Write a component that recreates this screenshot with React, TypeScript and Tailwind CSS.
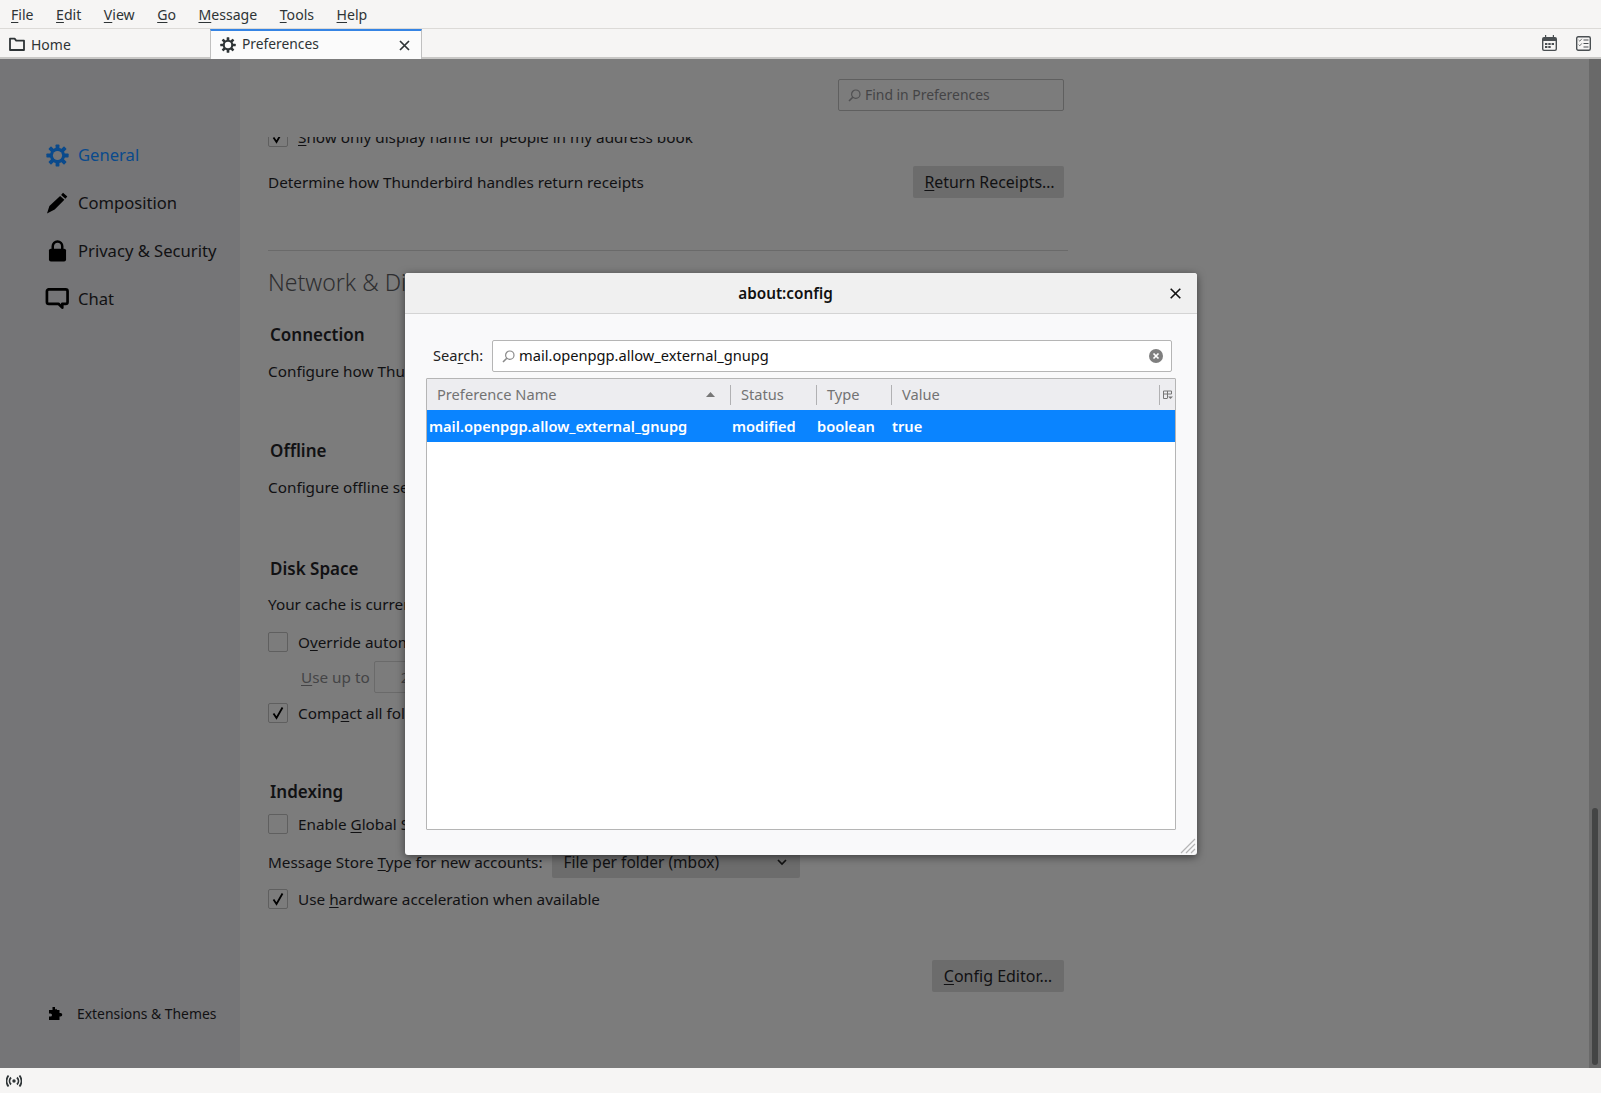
import React from "react";

const U = ({ children }: { children: React.ReactNode }) => <span className="underline underline-offset-2 decoration-1">{children}</span>;

const Gear = ({ size, color }: { size: number; color: string }) => (
  <svg width={size} height={size} viewBox="0 0 24 24" className="shrink-0">
    {[0, 45, 90, 135].map((a) => (
      <rect key={a} x="10" y="0.4" width="4" height="23.2" rx="0.8" fill={color} transform={`rotate(${a} 12 12)`} />
    ))}
    <circle cx="12" cy="12" r="8" fill={color} />
    <circle cx="12" cy="12" r="4.8" fill="var(--hole)" />
  </svg>
);

const SearchGlass = ({ color }: { color: string }) => (
  <svg width="13" height="13" viewBox="0 0 13 13" fill="none" stroke={color} strokeWidth="1.2" className="shrink-0">
    <circle cx="7.8" cy="5.2" r="4.2" />
    <path d="M4.8 8.2 1 12" strokeWidth="1.6" />
  </svg>
);

const Check = ({ checked }: { checked?: boolean }) => (
  <div className="w-5 h-5 shrink-0 border border-[#5f5f5f] rounded-[2px] flex items-center justify-center">
    {checked && (
      <svg width="14" height="14" viewBox="0 0 14 14" fill="none" stroke="#000" strokeWidth="1.8">
        <path d="M2.5 7.5 5.5 12 11.5 1.5" />
      </svg>
    )}
  </div>
);

const NavItem = ({ icon, label, active }: { icon: React.ReactNode; label: string; active?: boolean }) => (
  <div className={`h-12 flex items-center pl-[45px] gap-[9px] text-[16.6px] ${active ? "text-[#0a4a8c]" : "text-[#111113]"}`}>
    <div className="w-6 flex justify-center">{icon}</div>
    <span>{label}</span>
  </div>
);

const H = ({ children, className }: { children: React.ReactNode; className: string }) => (
  <div className={`text-[17px] font-semibold text-[#111113] pl-[2px] leading-6 ${className}`}>{children}</div>
);

const Row = ({ children, className }: { children: React.ReactNode; className: string }) => (
  <div className={`flex items-center leading-6 whitespace-nowrap ${className}`}>{children}</div>
);

const ColHead = ({ w, label, pl = 10, children }: { w: string; label: string; pl?: number; children?: React.ReactNode }) => (
  <div className={`${w} h-full flex items-center justify-between`}>
    <span style={{ paddingLeft: pl }}>{label}</span>
    {children}
  </div>
);

const Sep = () => <div className="w-px h-5 bg-[#b1b1b3] shrink-0" />;

export default function App() {
  return (
    <div className="w-[1601px] h-[1093px] relative overflow-hidden flex flex-col bg-[#7c7c7c] text-[15.3px] text-[#111113] font-['Noto_Sans',sans-serif]">
      {/* Menu bar */}
      <div className="h-[29px] shrink-0 bg-[#f6f5f4] border-b border-[#dcdad7] flex items-center pl-[11px] pt-px gap-[22.5px] text-[14.1px] text-[#2e3436]">
        <span><U>F</U>ile</span>
        <span><U>E</U>dit</span>
        <span><U>V</U>iew</span>
        <span><U>G</U>o</span>
        <span><U>M</U>essage</span>
        <span><U>T</U>ools</span>
        <span><U>H</U>elp</span>
      </div>
      {/* Tab bar */}
      <div className="h-[30px] shrink-0 bg-[#f6f5f4] border-b-2 border-[#c8c7c5] flex text-[14px] text-[#2e3436]">
        <div className="w-[210px] h-[30px] flex items-center pl-[9px] gap-[6px]">
          <svg width="16" height="16" viewBox="0 0 16 16" fill="none" stroke="#2e3436" strokeWidth="1.8">
            <path d="M1 14V2.600h4.600l1.600 2H15V14z" strokeLinejoin="round" />
          </svg>
          <span>Home</span>
        </div>
        <div className="w-[212px] h-[30px] bg-[#fbfbfb] border-x border-[#c0c0c0] border-t-2 border-t-[#3584e4] flex items-center pl-[9px] pr-[11px] [--hole:#fbfbfb]">
          <Gear size={16} color="#2e3436" />
          <span className="ml-[6px] flex-1 text-[13.8px] -mt-[2px]">Preferences</span>
          <svg width="11" height="11" viewBox="0 0 11 11" stroke="#2e3436" strokeWidth="1.7"><path d="M1 1l9 9M10 1l-9 9" /></svg>
        </div>
        <div className="flex-1 flex justify-end items-center gap-[19px] pr-[10px]">
          <svg width="15" height="16" viewBox="0 0 15 16" fill="#4a4f52">
            <path d="M3 0h1.200v2.500H3zM10.800 0H12v2.500h-1.200z" />
            <path fillRule="evenodd" d="M2 2h11a2 2 0 0 1 2 2v10a2 2 0 0 1-2 2H2a2 2 0 0 1-2-2V4a2 2 0 0 1 2-2zm-.6 4v8c0 .4.3.7.7.7h10.800c.4 0 .7-.3.7-.7V6z" />
            <path d="M3 8h2.400v2H3zM6.300 8h2.400v2H6.300zM9.600 8H12v2H9.600zM3 11h2.400v2H3zM6.300 11h2.400v2H6.300z" />
          </svg>
          <svg width="15" height="15" viewBox="0 0 15 15" fill="none" stroke="#4a4f52">
            <rect x="0.7" y="0.7" width="13.6" height="13.6" rx="1.500" strokeWidth="1.400" />
            <path d="M2.600 4l1.200 1.200L5.800 2.800M2.600 8.600l1.200 1.200 2-2.400" strokeWidth="1" stroke="#77797b" />
            <path d="M7.500 4h5M7.500 7.500h5M7.500 11h5" strokeWidth="1.200" />
          </svg>
        </div>
      </div>

      {/* Body */}
      <div className="flex-1 min-h-0 flex">
        <aside className="w-[240px] shrink-0 bg-[#757577] flex flex-col [--hole:#757577]">
          <div className="pt-[72px]">
            <NavItem active label="General" icon={<Gear size={23} color="#0a4a8c" />} />
            <NavItem label="Composition" icon={
              <svg width="22" height="22" viewBox="0 0 22 22" fill="#000"><path d="M17 .8l4.300 3.600-1.900 2.300-4.300-3.600zM14.100 4.100l4.300 3.600-9.700 9.900L1 21.500l2.400-7.400z" /></svg>
            } />
            <NavItem label="Privacy & Security" icon={
              <svg width="19" height="22" viewBox="0 0 20 23">
                <path d="M5 10V6.500a5 5 0 0 1 10 0V10" fill="none" stroke="#000" strokeWidth="2.600" />
                <rect x="1" y="9" width="18" height="13.500" rx="2" fill="#000" />
              </svg>
            } />
            <NavItem label="Chat" icon={
              <svg width="25" height="24" viewBox="0 0 25 24" fill="none" stroke="#000" strokeWidth="2.800">
                <path d="M3.500 2h18A2 2 0 0 1 23.500 4v11a2 2 0 0 1-2 2h-3.500v4l-4-4h-10a2 2 0 0 1-2-2V4a2 2 0 0 1 2-2z" strokeLinejoin="round" />
              </svg>
            } />
          </div>
          <div className="mt-auto mb-[42px] flex items-center pl-[49px] gap-[14px] text-[13.9px] h-6">
            <svg width="14" height="14" viewBox="0 0 14 14" fill="#000"><path d="M3.500 0h2.500v1.500a1 1 0 0 0 2 0V3h2.500v3h1a1.500 1.500 0 0 1 0 3.500h-1V13H0V9.500h1.500a1.500 1.500 0 0 0 0-3H0V3h3.500z" /></svg>
            <span>Extensions & Themes</span>
          </div>
        </aside>

        <main className="flex-1 min-w-0 flex flex-col">
          <div className="h-[78px] shrink-0 pl-[598px] pt-5">
            <div className="w-[226px] h-8 border border-[#5f5f5f] rounded-[2px] flex items-center pl-[9px] gap-[4px] text-[#444446] text-[13.9px]">
              <SearchGlass color="#505052" />
              <span>Find in Preferences</span>
            </div>
          </div>
          <div className="flex-1 min-h-0 overflow-hidden pl-[28px] w-[840px]">
            <Row className="gap-[10px] -mt-[12px] h-6"><Check checked /><span><U>S</U>how only display name for people in my address book</span></Row>
            <div className="mt-[17px] h-8 flex items-center justify-between w-[796px]">
              <span>Determine how Thunderbird handles return receipts</span>
              <div className="h-8 w-[151px] bg-[#6c6c6c] rounded-[2px] flex items-center justify-center text-[15.9px] pl-[2px] pt-px"><span><U>R</U>eturn Receipts…</span></div>
            </div>
            <div className="mt-[52px] h-px w-[800px] bg-[#6a6a6a]" />
            <div className="mt-[16px] text-[23px] font-light leading-[30px] text-[#2e2e30]">Network & Disk Space</div>
            <H className="mt-[26px]">Connection</H>
            <Row className="mt-[12px]">Configure how Thunderbird connects to the Internet</Row>
            <H className="mt-[56px]">Offline</H>
            <Row className="mt-[12px]">Configure offline settings</Row>
            <H className="mt-[58px]">Disk Space</H>
            <Row className="mt-[11px]">Your cache is currently using 0 bytes of disk space</Row>
            <Row className="mt-[14px] gap-[10px]"><Check /><span>O<U>v</U>erride automatic cache management</span></Row>
            <Row className="mt-[11px] pl-[33px] text-[#444446]">
              <span><U>U</U>se up to</span>
              <div className="ml-[4px] w-[100px] h-8 border border-[#6a6a6a] rounded-[2px] flex items-center pl-[26px] -my-1">2</div>
            </Row>
            <Row className="mt-[12px] gap-[10px]"><Check checked /><span>Comp<U>a</U>ct all folders when it will save over 20 MB</span></Row>
            <H className="mt-[55px]">Indexing</H>
            <Row className="mt-[8px] gap-[10px]"><Check /><span>Enable <U>G</U>lobal Search and Indexer</span></Row>
            <Row className="mt-[14px]">
              <span>Message Store <U>T</U>ype for new accounts:</span>
              <div className="ml-[9px] w-[248px] h-8 bg-[#6c6c6c] rounded-[2px] flex items-center justify-between pl-[12px] pr-[13px] -my-1 text-[15.5px]">
                <span>File per folder (mbox)</span>
                <svg width="10" height="7" viewBox="0 0 10 7" fill="none" stroke="#111" strokeWidth="1.700"><path d="M1 1l4 4 4-4" /></svg>
              </div>
            </Row>
            <Row className="mt-[13px] gap-[10px]"><Check checked /><span>Use <U>h</U>ardware acceleration when available</span></Row>
            <div className="mt-[49px] flex justify-end w-[796px]">
              <div className="h-8 w-[132px] bg-[#6c6c6c] rounded-[2px] flex items-center justify-center text-[16px]"><span><U>C</U>onfig Editor…</span></div>
            </div>
          </div>
        </main>

        {/* Scrollbar */}
        <div className="w-3 shrink-0 bg-[#696969] flex flex-col justify-end items-center pb-[3px]">
          <div className="w-[6px] h-[257px] rounded-full bg-[#444545]" />
        </div>
      </div>

      {/* Status bar */}
      <div className="h-[25px] shrink-0 bg-[#f6f5f4] flex items-center pl-[6px]">
        <svg width="16" height="14" viewBox="0 0 16 14" fill="none" stroke="#2e3436" strokeWidth="1.800">
          <circle cx="8" cy="7" r="1.700" fill="#2e3436" stroke="none" />
          <path d="M5 3.500a5 5 0 0 0 0 7M11 3.500a5 5 0 0 1 0 7M2.500 1.500a9 9 0 0 0 0 11M13.500 1.500a9 9 0 0 1 0 11" />
        </svg>
      </div>

      {/* Dialog */}
      <div className="absolute left-[405px] top-[273px] w-[792px] h-[582px] rounded-[3px] bg-[#f9f9fa] shadow-[0_2px_8px_rgba(0,0,0,0.5)] flex flex-col text-[14.65px]">
        <div className="h-[41px] shrink-0 bg-[#f0f0f0] border-b border-[#d4d4d4] rounded-t-[3px] flex items-center justify-between">
          <div className="w-[26px]" />
          <span className="text-[15.3px] font-semibold text-[#111]">about:config</span>
          <div className="w-[57px] pl-[30px]">
            <svg width="11" height="11" viewBox="0 0 11 11" stroke="#111" strokeWidth="1.600"><path d="M.7.7l9.600 9.600M10.300.7l-9.600 9.600" /></svg>
          </div>
        </div>
        <div className="flex-1 min-h-0 pl-[21px] pr-[21px] pt-[26px] pb-[25px] flex flex-col">
          <div className="h-8 flex items-center shrink-0 pr-[4px]">
            <span className="w-[66px] pl-[7px] text-[#222]">Sea<U>r</U>ch:</span>
            <div className="flex-1 h-8 bg-white border border-[#b5b5b5] rounded-[2px] flex items-center pl-[9px] pr-[8px]">
              <SearchGlass color="#8a8a8a" />
              <span className="ml-[4px] flex-1 text-[#111]">mail.openpgp.allow_external_gnupg</span>
              <svg width="14" height="14" viewBox="0 0 14 14">
                <circle cx="7" cy="7" r="7" fill="#7f7f7f" />
                <path d="M4.500 4.500l5 5M9.500 4.500l-5 5" stroke="#fff" strokeWidth="1.700" />
              </svg>
            </div>
          </div>
          <div className="mt-[6px] flex-1 min-h-0 bg-white border border-[#b5b5b5] rounded-[1px] flex flex-col">
            <div className="h-[31px] shrink-0 bg-[#ededf0] flex items-center text-[#737373]">
              <ColHead w="w-[303px]" label="Preference Name">
                <svg width="9" height="5" viewBox="0 0 9 5" fill="#777" className="mr-[15px]"><path d="M4.500 0 9 5H0z" /></svg>
              </ColHead>
              <Sep />
              <ColHead w="w-[85px]" label="Status" />
              <Sep />
              <ColHead w="w-[74px]" label="Type" />
              <Sep />
              <ColHead w="w-[267px]" label="Value" />
              <Sep />
              <svg width="10" height="10" viewBox="0 0 10 10" fill="none" stroke="#777" className="ml-[3px]">
                <path d="M.5 1h8v3M.5 1v7.500h4M.5 4h8M4.500 1v7" />
                <path d="M5 6.500h5L7.500 9z" fill="#777" stroke="none" />
              </svg>
            </div>
            <div className="h-[32px] shrink-0 bg-[#0a84ff] text-white font-semibold flex items-center pt-px">
              <span className="w-[305px] pl-[2px]">mail.openpgp.allow_external_gnupg</span>
              <span className="w-[85px]">modified</span>
              <span className="w-[75px]">boolean</span>
              <span>true</span>
            </div>
          </div>
        </div>
        <svg width="16" height="16" viewBox="0 0 16 16" stroke="#b5b5b5" strokeWidth="1.200" className="absolute right-[1px] bottom-[1px]">
          <path d="M1 15 15 1M6 15l9-9M11 15l4-4" />
        </svg>
      </div>
    </div>
  );
}
